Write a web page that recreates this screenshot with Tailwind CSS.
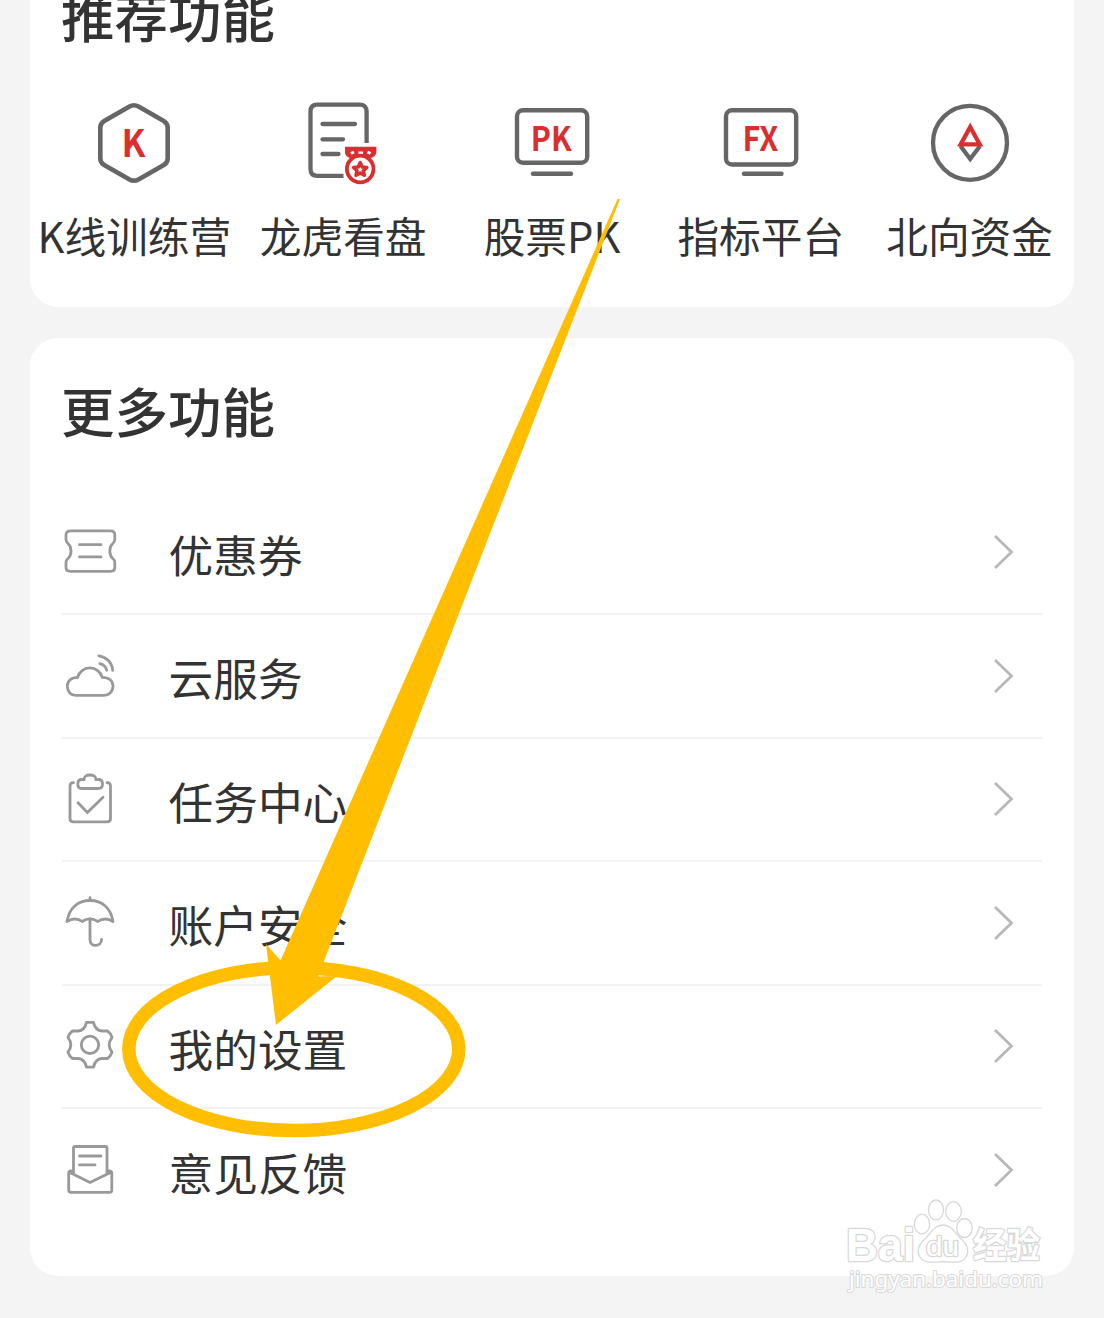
<!DOCTYPE html>
<html lang="zh-CN">
<head>
    <meta charset="UTF-8">
    <meta name="viewport" content="width=device-width, initial-scale=1.0">
    <title>更多功能</title>
    <script src="https://cdn.jsdelivr.net/npm/@tailwindcss/browser@4"></script>
</head>
<body class="relative h-[1318px] overflow-hidden bg-[#f4f4f4] px-[30px] font-['Noto_Sans_CJK_SC',sans-serif] text-[#333]">

    <!-- 推荐功能 -->
    <section class="h-[307px] overflow-hidden rounded-b-[28px] bg-white">
        <h2 class="-mt-[25px] ml-[31px] h-[85px] text-[53.5px] leading-[80px] font-medium">推荐功能</h2>
        <div class="mt-[38px] grid grid-cols-5 text-center text-[41.7px] leading-[60px] whitespace-nowrap">
            <div class="flex flex-col items-center">
                <svg class="size-[90px]" viewBox="0 0 90 90" fill="none" stroke="#666" stroke-width="4.6">
                    <path d="M40.5 8.6Q45 6 49.5 8.6L74.8 22.9Q78.7 25.2 78.7 29.5V60.5Q78.7 64.8 74.8 67.1L49.5 81.4Q45 84 40.5 81.4L15.2 67.1Q11.3 64.8 11.3 60.5V29.5Q11.3 25.2 15.2 22.9Z"/>
                    <text x="44.5" y="58.5" text-anchor="middle" textLength="24" lengthAdjust="spacingAndGlyphs" font-size="38" font-weight="700" fill="#d9302f" stroke="none">K</text>
                </svg>
                <span class="mt-[17px]">K线训练营</span>
            </div>
            <div class="flex flex-col items-center">
                <svg class="size-[90px]" viewBox="0 0 90 90" fill="none" stroke="#666" stroke-width="4.3">
                    <path d="M68.6 45V13.5Q68.6 6.7 61.8 6.7H19.3Q12.5 6.7 12.5 13.5V71Q12.5 77.8 19.3 77.8H45.5"/>
                    <path d="M24.5 26H57M24.5 41.3H45M24.5 56H40.5" stroke-linecap="round"/>
                    <path d="M47 48.8H78.4V55Q77 59 73 60H52Q48 59 47 55Z" fill="#d9302f" stroke="none"/>
                    <path d="M53 55.5L56 54M60.5 55H65M69.5 54L72.5 55.5" stroke="#fff" stroke-width="3"/>
                    <circle cx="62.2" cy="71" r="13.3" fill="#fff" stroke="#d9302f" stroke-width="3.8"/>
                    <path d="M62.2 64.7L64.2 69L68.8 69.5L65.4 72.7L66.3 77.3L62.2 75L58.1 77.3L59 72.7L55.6 69.5L60.2 69Z" stroke="#d9302f" stroke-width="3.6" stroke-linejoin="round"/>
                </svg>
                <span class="mt-[17px]">龙虎看盘</span>
            </div>
            <div class="flex flex-col items-center">
                <svg class="size-[90px]" viewBox="0 0 90 90" fill="none" stroke="#666" stroke-width="4.4">
                    <rect x="10" y="12.2" width="70.2" height="52.5" rx="6"/>
                    <path d="M26 75.7H64" stroke-linecap="round"/>
                    <text x="44.2" y="53" text-anchor="middle" textLength="41" lengthAdjust="spacingAndGlyphs" font-size="33.5" font-weight="700" fill="#d9302f" stroke="none">PK</text>
                </svg>
                <span class="mt-[17px]">股票PK</span>
            </div>
            <div class="flex flex-col items-center">
                <svg class="size-[90px]" viewBox="0 0 90 90" fill="none" stroke="#666" stroke-width="4.4">
                    <rect x="10" y="12.2" width="70.2" height="54.3" rx="6"/>
                    <path d="M28 75.7H65.5" stroke-linecap="round"/>
                    <text x="44.4" y="53" text-anchor="middle" textLength="36" lengthAdjust="spacingAndGlyphs" font-size="33.5" font-weight="700" fill="#d9302f" stroke="none">FX</text>
                </svg>
                <span class="mt-[17px]">指标平台</span>
            </div>
            <div class="flex flex-col items-center">
                <svg class="size-[90px]" viewBox="0 0 90 90" fill="none" stroke="#666" stroke-width="4.3">
                    <circle cx="45" cy="44.8" r="37"/>
                    <path d="M35.5 48L45.2 61L55 48"/>
                    <path d="M45.2 29L54.7 46.3H35.7Z" stroke="#d9302f"/>
                </svg>
                <span class="mt-[17px]">北向资金</span>
            </div>
        </div>
    </section>

    <!-- 更多功能 -->
    <section class="mt-[31px] h-[938px] rounded-[28px] bg-white px-8">
        <h2 class="-ml-px h-[153.5px] pt-[32px] text-[53.5px] leading-[80px] font-medium">更多功能</h2>
        <ul class="divide-y-2 divide-[#f2f2f2] text-[44.7px]">
            <li class="flex h-[123.5px] items-center pr-[27px]">
                <svg class="-ml-0.5 size-[60px]" viewBox="0 0 60 60" fill="none" stroke="#999" stroke-width="2.8" stroke-linecap="round">
                    <path d="M10.5 8.9H50.5Q54.8 8.9 54.8 13V17.5Q54.8 20 52.8 21.5Q49.8 24 49.8 29T52.8 36.5Q54.8 38 54.8 40.5V45.5Q54.8 49.3 50.5 49.3H10.5Q6 49.3 6 45.5V40.5Q6 38 8 36.5Q11 34 11 29T8 21.5Q6 20 6 17.5V13Q6 8.9 10.5 8.9Z"/>
                    <path d="M19.5 22.7H41M19.5 34.9H41"/>
                </svg>
                <span class="mt-0.5 ml-[48.5px] flex-1">优惠券</span>
                <svg class="h-10 w-6" viewBox="0 0 24 40" fill="none" stroke="#b8b8b8" stroke-width="2.8"><path d="M4 4L20.5 20L4 36"/></svg>
            </li>
            <li class="flex h-[123.5px] items-center pr-[27px]">
                <svg class="-ml-0.5 size-[60px]" viewBox="0 0 60 60" fill="none" stroke="#999" stroke-width="2.8" stroke-linecap="round">
                    <path d="M17.5 31.3A12.9 12.9 0 0 1 42.3 31.3C49 31.3 53 35 53 40.3C53 45.8 48.5 49.4 44 49.4H16C11 49.4 7.3 45.8 7.3 40.3C7.3 35 11.5 31.3 17.5 31.3Z"/>
                    <path d="M38.8 9.8C46.5 11 52 16.5 52.7 24.3M39.8 17.7C43.5 18.5 46 21 46.7 24.3"/>
                </svg>
                <span class="mt-0.5 ml-[48.5px] flex-1">云服务</span>
                <svg class="h-10 w-6" viewBox="0 0 24 40" fill="none" stroke="#b8b8b8" stroke-width="2.8"><path d="M4 4L20.5 20L4 36"/></svg>
            </li>
            <li class="flex h-[123.5px] items-center pr-[27px]">
                <svg class="-ml-0.5 size-[60px]" viewBox="0 0 60 60" fill="none" stroke="#999" stroke-width="2.8" stroke-linecap="round">
                    <path d="M13.5 13.7Q10 13.7 10 17.2V49.5Q10 52.8 13.5 52.8H47Q50.5 52.8 50.5 49.5V17.2Q50.5 13.7 47 13.7"/>
                    <path d="M24 10.5C24.5 7 26 6 30 6S35.5 7 36 10.5H38.5Q42.5 10.5 42.5 15T38.5 19.5H21.5Q17.8 19.5 17.8 15T21.5 10.5Z"/>
                    <path d="M18 33.7L27.4 43.5L43 28.2"/>
                </svg>
                <span class="mt-0.5 ml-[48.5px] flex-1">任务中心</span>
                <svg class="h-10 w-6" viewBox="0 0 24 40" fill="none" stroke="#b8b8b8" stroke-width="2.8"><path d="M4 4L20.5 20L4 36"/></svg>
            </li>
            <li class="flex h-[123.5px] items-center pr-[27px]">
                <svg class="-ml-0.5 size-[60px]" viewBox="0 0 60 60" fill="none" stroke="#999" stroke-width="2.8" stroke-linecap="round" stroke-linejoin="round">
                    <path d="M7 28.5C9 15 18 7.5 30 7.5S51 15 53 28.5Q49 26 45.5 26Q41 26 37.8 28.5Q34 25.8 30 25.8T22.2 28.5Q19 26 14.5 26Q11 26 7 28.5Z"/>
                    <path d="M30 4.7V7.5M30 26V46.5C30 50.5 32.5 52.4 35.5 52.4C39 52.4 41.4 50 41.6 46.5"/>
                </svg>
                <span class="mt-0.5 ml-[48.5px] flex-1">账户安全</span>
                <svg class="h-10 w-6" viewBox="0 0 24 40" fill="none" stroke="#b8b8b8" stroke-width="2.8"><path d="M4 4L20.5 20L4 36"/></svg>
            </li>
            <li class="flex h-[123.5px] items-center pr-[27px]">
                <svg class="-ml-0.5 size-[60px]" viewBox="0 0 60 60" fill="none" stroke="#999" stroke-width="2.8" stroke-linejoin="round">
                    <path d="M26.5 6.4H33.5C34.5 11 37.5 14.7 42 15H47.5Q50.5 17 52 21.3C48.5 26 48.5 31.5 52 36.2Q50.5 40.5 47.5 42.5H42C37.5 42.8 34.5 46.5 33.5 51.1H26.5C25.5 46.5 22.5 42.8 18 42.5H12.5Q9.5 40.5 8 36.2C11.5 31.5 11.5 26 8 21.3Q9.5 17 12.5 15H18C22.5 14.7 25.5 11 26.5 6.4Z"/>
                    <circle cx="30" cy="28.8" r="8.7"/>
                </svg>
                <span class="mt-0.5 ml-[48.5px] flex-1">我的设置</span>
                <svg class="h-10 w-6" viewBox="0 0 24 40" fill="none" stroke="#b8b8b8" stroke-width="2.8"><path d="M4 4L20.5 20L4 36"/></svg>
            </li>
            <li class="flex h-[122.5px] items-center pr-[27px]">
                <svg class="-ml-0.5 size-[60px]" viewBox="0 0 60 60" fill="none" stroke="#999" stroke-width="2.8" stroke-linejoin="round">
                    <path d="M13.5 35V8Q13.5 6.5 15 6.5H45.5Q47 6.5 47 8V35"/>
                    <path d="M13.5 31H11Q8.7 31 8.7 33.5V50Q8.7 52.4 11 52.4H49.5Q51.8 52.4 51.8 50V33.5Q51.8 31 49.5 31H47M10 32.5L30 42.5L50.5 32.5"/>
                    <path d="M19.5 16H41M19.5 24.9H35" stroke-linecap="round"/>
                </svg>
                <span class="mt-0.5 ml-[48.5px] flex-1">意见反馈</span>
                <svg class="h-10 w-6" viewBox="0 0 24 40" fill="none" stroke="#b8b8b8" stroke-width="2.8"><path d="M4 4L20.5 20L4 36"/></svg>
            </li>
        </ul>
    </section>

    <!-- 箭头和圆圈标注 -->
    <svg class="absolute top-0 left-0 h-[1318px] w-[1104px]" viewBox="0 0 1104 1318">
        <path d="M617.5 199H620L324 961L318 976.5L337 976L276 1025L266 944L280.5 960.5Z" fill="#ffbf00"/>
        <ellipse cx="293.8" cy="1049" rx="165" ry="81.5" fill="none" stroke="#ffbf00" stroke-width="13.5"/>
    </svg>

    <!-- 水印 -->
    <svg class="absolute top-[1190px] left-[840px] h-[110px] w-[220px]" viewBox="0 0 220 110" fill="#fff" stroke="#d8d8d8" stroke-width="1.3">
        <path d="M103 35C112 35 115 43 120 48C126 53 130 60 126 67C122 74 112 72 103 71.5C94 72 84 74 80 67C76 60 80 53 86 48C91 43 94 35 103 35Z"/>
        <ellipse cx="82" cy="34" rx="7.7" ry="9.8"/>
        <ellipse cx="96" cy="20" rx="7.5" ry="10"/>
        <ellipse cx="113.5" cy="21.5" rx="7.8" ry="9.8"/>
        <ellipse cx="124.5" cy="38" rx="7.7" ry="9.5"/>
        <g paint-order="stroke" stroke-width="2.6" stroke-linejoin="round">
            <text x="6" y="71" font-family="Liberation Sans" font-size="46" font-weight="700" textLength="69" lengthAdjust="spacingAndGlyphs">Bai</text>
            <text x="86" y="66" font-family="Liberation Sans" font-size="27" textLength="33" lengthAdjust="spacingAndGlyphs">du</text>
            <text x="133" y="68" font-size="35" font-weight="700" textLength="67" lengthAdjust="spacingAndGlyphs">经验</text>
            <text x="9" y="97" font-family="Noto Sans" font-size="22" stroke-width="2" textLength="194" lengthAdjust="spacingAndGlyphs">jingyan.baidu.com</text>
        </g>
    </svg>
</body>
</html>
